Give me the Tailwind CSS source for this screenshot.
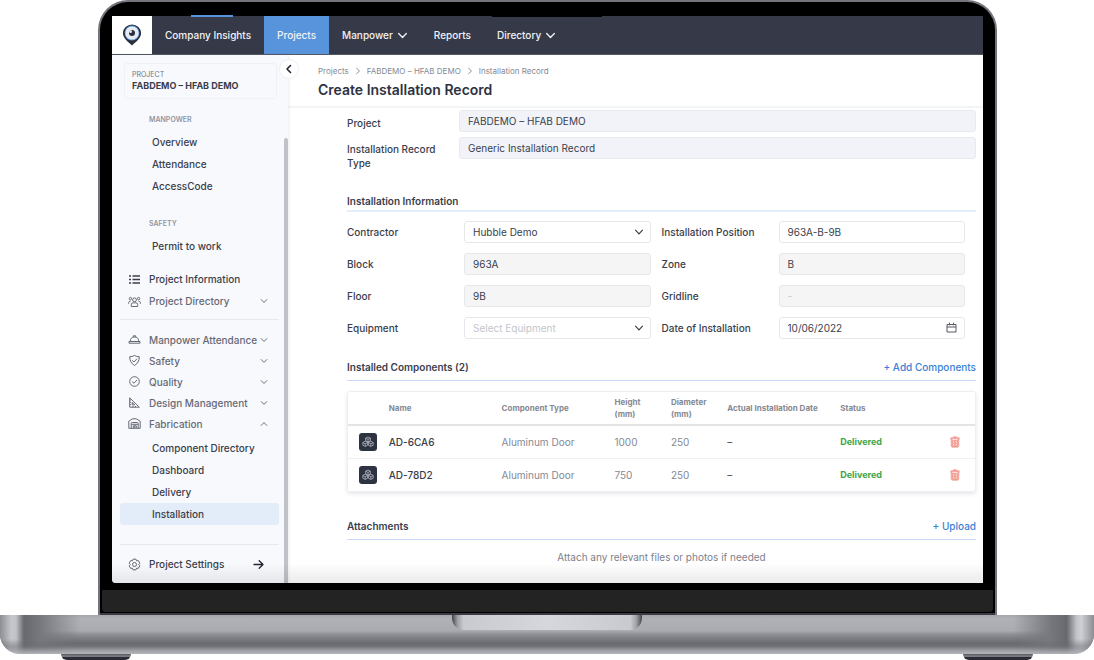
<!DOCTYPE html>
<html lang="en">
<head>
<meta charset="utf-8">
<meta name="viewport" content="width=device-width, initial-scale=1">
<title>Create Installation Record</title>
<script src="https://cdn.jsdelivr.net/npm/@tailwindcss/browser@4"></script>
</head>
<body class="bg-white font-['Inter','Liberation_Sans',sans-serif] text-[10px] leading-[14px] text-[#3a3e4b] overflow-hidden">

<svg class="hidden" aria-hidden="true">
  <symbol id="chevron" viewBox="0 0 10 10"><path d="M1.5 3.2 5 6.8l3.5-3.6" fill="none" stroke="currentColor" stroke-width="1.2" stroke-linecap="round" stroke-linejoin="round"/></symbol>
  <symbol id="module" viewBox="0 0 18 18">
    <rect width="18" height="18" rx="3" fill="#2e3342"/>
    <g fill="none" stroke="#b4b8c2" stroke-width="0.8" stroke-linejoin="round">
      <path d="M9 4l2.400 1.200v2.600L9 9 6.600 7.800V5.200zM6.200 8.200l2.400 1.300v2.700l-2.400 1.200-2.400-1.200V9.500zM11.800 8.200l2.400 1.300v2.700l-2.400 1.200-2.400-1.200V9.500z"/>
      <path d="M6.600 5.200 9 6.400l2.400-1.200M9 6.400V9M3.800 9.500l2.400 1.200 2.400-1.200M6.200 10.700v2.700M9.400 9.500l2.400 1.200 2.400-1.200M11.800 10.700v2.700"/>
    </g>
  </symbol>
  <symbol id="trash" viewBox="0 0 10 12">
    <path d="M3.500.8h3l.5 1h2.200v2H.8v-2H3zM1.200 4.300h7.600v5.400q0 1.500-1.500 1.500H2.700q-1.500 0-1.500-1.500z" fill="#f3a097" stroke="#f3a097" stroke-width=".8" stroke-linejoin="round"/>
    <path d="M3.600 5.400v1.400M3.600 8v1.300M6.400 5.400v1.400M6.400 8v1.300M2.500 3.400h5" stroke="#fff" stroke-width=".8"/>
  </symbol>
</svg>

<div class="flex flex-col">
  <!-- Laptop lid -->
  <div class="ml-[98px] mr-[97px] rounded-t-[30px] border-x-2 border-t-2 border-[#74757c] bg-black">
    <div class="mx-3 pt-[14px]">
      <!-- Screen -->
      <div class="relative overflow-hidden rounded-bl-sm bg-white">

        <header class="flex h-[39px] bg-[#363a48] border-b border-[#555965] font-medium text-[#f1f2f5]">
          <a href="#" aria-label="Home" class="flex w-10 items-center justify-center bg-white">
            <svg class="h-[22px] w-5" viewBox="0 0 20 22">
              <path d="M10 21.500C7 18.600.9 14.400.9 9.300a9.100 8.800 0 0 1 18.200 0C19.100 14.400 13 18.600 10 21.500z" fill="#2b2f3b"/>
              <circle cx="10" cy="9" r="7.400" fill="#5f9be0"/>
              <circle cx="10" cy="9" r="6.600" fill="#e6ebf3"/>
              <circle cx="10" cy="9" r="3" fill="#2b2f3b"/>
              <circle cx="8.600" cy="7.700" r="1.400" fill="#e6ebf3"/>
            </svg>
          </a>
          <nav class="flex" aria-label="Main">
            <a href="#" class="flex items-center px-[13px]">Company Insights</a>
            <a href="#" aria-current="page" class="flex items-center bg-[#5894dc] px-[13px]">Projects</a>
            <a href="#" class="flex items-center gap-1 px-[13px]">Manpower <svg class="size-[11px]"><use href="#chevron"/></svg></a>
            <a href="#" class="flex items-center px-[13px]">Reports</a>
            <a href="#" class="flex items-center gap-1 px-[13px]">Directory <svg class="size-[11px]"><use href="#chevron"/></svg></a>
          </nav>
        </header>

        <div class="flex">
          <!-- Sidebar -->
          <aside class="relative w-44 shrink-0 bg-[#f8f9fd] pt-2 shadow-[0_0_3px_rgba(40,50,80,0.15)]">
            <div class="ml-3 mr-[11px] flex h-9 flex-col justify-center rounded-[3px] border border-[#eff1f7] px-[7px]">
              <div class="text-[7px] leading-[10px] text-[#70747f]">PROJECT</div>
              <div class="text-[9px] leading-[12px] font-bold whitespace-nowrap">FABDEMO – HFAB DEMO</div>
            </div>
            <nav class="ml-2 mr-[9px] mt-[10px] font-medium" aria-label="Project">
              <h2 class="flex h-[22px] items-center pl-[29px] text-[7px] font-semibold text-[#92959f]">MANPOWER</h2>
              <a href="#" class="flex h-[22px] items-center pl-8">Overview</a>
              <a href="#" class="flex h-[22px] items-center pl-8">Attendance</a>
              <a href="#" class="flex h-[22px] items-center pl-8">AccessCode</a>
              <h2 class="mt-4 flex h-[22px] items-center pl-[29px] text-[7px] font-semibold text-[#92959f]">SAFETY</h2>
              <a href="#" class="flex h-[22px] items-center pl-8">Permit to work</a>

              <a href="#" class="mt-[11px] flex h-[22px] items-center pl-2">
                <svg class="mr-2 size-[13px]" viewBox="0 0 13 13" fill="none" stroke="currentColor" stroke-width="1.300"><path d="M4.500 3H12M4.500 6.500H12M4.500 10H12M1 3h2M1 6.500h2M1 10h2"/></svg>
                Project Information</a>
              <button type="button" class="flex h-[22px] w-full items-center pl-2 pr-[11px] text-[#666a75]">
                <svg class="mr-2 size-[13px]" viewBox="0 0 13 13" fill="none" stroke="currentColor"><circle cx="6.500" cy="4.800" r="1.900"/><path d="M3.300 11.500V9.600q0-1.800 1.800-1.800h2.800q1.800 0 1.800 1.800v1.900zM.7 8.800V7.500q0-1.400 1.900-1.400M12.300 8.800V7.500q0-1.400-1.900-1.400"/><circle cx="2.400" cy="3.600" r="1.200"/><circle cx="10.600" cy="3.600" r="1.200"/></svg>
                Project Directory <svg class="ml-auto size-2"><use href="#chevron"/></svg></button>

              <hr class="mt-[7px] mb-[9px] border-[#e6e8ee]">

              <div class="text-[#666a75]">
                <button type="button" class="flex h-[21px] w-full items-center pl-2 pr-[11px] whitespace-nowrap">
                  <svg class="mr-2 size-[13px] shrink-0" viewBox="0 0 13 13" fill="none" stroke="currentColor"><path d="M2.300 8.500q0-4.500 4.200-4.500t4.200 4.500M5.300 4V2.800h2.400V4M1 8.500h11v1.700H1z"/></svg>
                  Manpower Attendance <svg class="ml-auto size-2 shrink-0"><use href="#chevron"/></svg></button>
                <button type="button" class="flex h-[21px] w-full items-center pl-2 pr-[11px]">
                  <svg class="mr-2 size-[13px]" viewBox="0 0 13 13" fill="none" stroke="currentColor"><path d="M6.500 1.500q2 1.200 4.800 1.200 0 6-4.800 8.800-4.800-2.800-4.800-8.800 2.800 0 4.800-1.200zM4.200 6.300 6 8l3-3.300"/></svg>
                  Safety <svg class="ml-auto size-2"><use href="#chevron"/></svg></button>
                <button type="button" class="flex h-[21px] w-full items-center pl-2 pr-[11px]">
                  <svg class="mr-2 size-[13px]" viewBox="0 0 13 13" fill="none" stroke="currentColor"><circle cx="6.500" cy="6.500" r="4.800"/><path d="M4.200 6.600 6 8.200l3-3.200"/></svg>
                  Quality <svg class="ml-auto size-2"><use href="#chevron"/></svg></button>
                <button type="button" class="flex h-[21px] w-full items-center pl-2 pr-[11px]">
                  <svg class="mr-2 size-[13px]" viewBox="0 0 13 13" fill="none" stroke="currentColor"><path d="M1.700 1.800v9.400h9.600zM4.200 6.400v2.500h2.500zM1.700 4h1.200M1.700 6.300h1.200M1.700 8.600h1.200M5 11.200V10M7.500 11.200V10"/></svg>
                  Design Management <svg class="ml-auto size-2"><use href="#chevron"/></svg></button>
                <button type="button" aria-expanded="true" class="flex h-[21px] w-full items-center pl-2 pr-[11px]">
                  <svg class="mr-2 size-[13px]" viewBox="0 0 13 13" fill="none" stroke="currentColor"><path d="M.8 11.300V4.200l3.700-2.400h3.700l4 2.400v7.100zM3.200 11.300V6.500q0-1 1-1h5q1 0 1 1v4.800M3.200 7.300h7M5.300 11V8.800h3V11M6.800 8.800V11"/></svg>
                  Fabrication <svg class="ml-auto size-2 rotate-180"><use href="#chevron"/></svg></button>
              </div>

              <div class="mt-[3px]">
                <a href="#" class="flex h-[22px] items-center pl-8">Component Directory</a>
                <a href="#" class="flex h-[22px] items-center pl-8">Dashboard</a>
                <a href="#" class="flex h-[22px] items-center pl-8">Delivery</a>
                <a href="#" aria-current="page" class="flex h-[22px] items-center rounded-[3px] bg-[#e2edf9] pl-8">Installation</a>
              </div>

              <hr class="mt-[19px] mb-2 border-[#e6e8ee]">
              <a href="#" class="mb-2 flex h-[22px] items-center pl-2 pr-[15px]">
                <svg class="mr-2 size-[13px]" viewBox="0 0 13 13" fill="none" stroke="#666a75"><path d="M5 1.200h3l.6 1.600 1.700-.2 1.500 2.600-1.100 1.300 1.100 1.300-1.500 2.600-1.700-.2-.6 1.600H5l-.6-1.600-1.700.2-1.500-2.600 1.100-1.300-1.100-1.300 1.500-2.600 1.700.2z" stroke-linejoin="round"/><circle cx="6.500" cy="6.500" r="2"/></svg>
                Project Settings
                <svg class="ml-auto size-[11px]" viewBox="0 0 11 11" fill="none" stroke="#22252f" stroke-width="1.300" stroke-linecap="round" stroke-linejoin="round"><path d="M1 5.500h9M6.200 1.700 10 5.500 6.200 9.300"/></svg>
              </a>
            </nav>
            <div class="absolute right-0 top-[83px] bottom-0 w-1 rounded-t bg-[#c0c2c9]"></div>
            <button type="button" aria-label="Collapse sidebar" class="absolute -right-[11px] top-1 z-10 flex size-5 items-center justify-center rounded-full border border-[#eef0f4] bg-white">
              <svg class="size-[10px] text-[#22252f]" viewBox="0 0 10 10" fill="none" stroke="currentColor" stroke-width="1.600" stroke-linecap="round" stroke-linejoin="round"><path d="M6.500 1.500 3 5l3.500 3.500"/></svg>
            </button>
          </aside>

          <!-- Main -->
          <main class="min-w-0 flex-1 bg-white">
            <div class="h-[53px] border-b-2 border-[#f3f4f6] pl-[30px] pt-[9px]">
              <nav aria-label="Breadcrumb" class="flex h-[14px] items-center gap-[5px] text-[8px] text-[#858993]">
                <a href="#">Projects</a><svg class="size-2 -rotate-90"><use href="#chevron"/></svg>
                <a href="#">FABDEMO – HFAB DEMO</a><svg class="size-2 -rotate-90"><use href="#chevron"/></svg>
                <span>Installation Record</span>
              </nav>
              <h1 class="mt-[3px] text-[14px] leading-[18px] font-semibold text-[#2e323f]">Create Installation Record</h1>
            </div>

            <form class="pl-[59px] pr-[7px] pt-[2px]">
              <div class="grid grid-cols-[112px_1fr] gap-y-[5px]">
                <label for="project" class="pt-[6px] font-medium">Project</label>
                <input id="project" readonly value="FABDEMO – HFAB DEMO" class="h-[22px] min-w-0 rounded-[3px] border border-[#e8eaf0] bg-[#f1f3f9] px-2">
                <label for="rtype" class="w-24 pt-[5px] font-medium">Installation Record Type</label>
                <input id="rtype" readonly value="Generic Installation Record" class="h-[22px] min-w-0 rounded-[3px] border border-[#e8eaf0] bg-[#f1f3f9] px-2">
              </div>

              <h2 class="mt-6 border-b-2 border-[#e2eefb] pb-[2px] font-semibold">Installation Information</h2>
              <div class="mt-[9px] grid grid-cols-[117px_1fr_128px_1fr] items-center gap-y-[10px] pr-[11px] font-medium">
                <label for="contractor">Contractor</label>
                <div class="relative">
                  <select id="contractor" class="block h-[22px] w-full appearance-none rounded-[3px] border border-[#e6e7ea] bg-white px-2 font-normal"><option>Hubble Demo</option></select>
                  <svg class="pointer-events-none absolute right-[7px] top-[6px] size-[10px]"><use href="#chevron"/></svg>
                </div>
                <label for="position" class="pl-[11px]">Installation Position</label>
                <input id="position" value="963A-B-9B" class="h-[22px] w-full rounded-[3px] border border-[#e6e7ea] px-2 font-normal">

                <label for="block">Block</label>
                <input id="block" disabled value="963A" class="h-[22px] w-full rounded-[3px] border border-[#e6e7ea] bg-[#f5f5f5] px-2 font-normal">
                <label for="zone" class="pl-[11px]">Zone</label>
                <input id="zone" disabled value="B" class="h-[22px] w-full rounded-[3px] border border-[#e6e7ea] bg-[#f5f5f5] px-2 font-normal">

                <label for="floor">Floor</label>
                <input id="floor" disabled value="9B" class="h-[22px] w-full rounded-[3px] border border-[#e6e7ea] bg-[#f5f5f5] px-2 font-normal">
                <label for="gridline" class="pl-[11px]">Gridline</label>
                <input id="gridline" disabled placeholder="-" class="h-[22px] w-full rounded-[3px] border border-[#e6e7ea] bg-[#f5f5f5] px-2 font-normal placeholder:text-[#c3c5ca]">

                <label for="equipment">Equipment</label>
                <div class="relative">
                  <select id="equipment" class="block h-[22px] w-full appearance-none rounded-[3px] border border-[#e6e7ea] bg-white px-2 font-normal text-[#c3c5ca]"><option>Select Equipment</option></select>
                  <svg class="pointer-events-none absolute right-[7px] top-[6px] size-[10px]"><use href="#chevron"/></svg>
                </div>
                <label for="date" class="pl-[11px]">Date of Installation</label>
                <div class="relative">
                  <input id="date" value="10/06/2022" class="block h-[22px] w-full rounded-[3px] border border-[#e6e7ea] px-2 font-normal">
                  <button type="button" aria-label="Open calendar" class="absolute right-2 top-[5px]">
                    <svg class="block size-[11px]" viewBox="0 0 11 11" fill="none" stroke="#555965"><path d="M1 2.500h9v7.500H1zM1 5h9M3.500.7v2.600M7.500.7v2.600"/></svg>
                  </button>
                </div>
              </div>

              <div class="mt-[21px] flex items-center justify-between border-b border-[#c8dbf7] pb-[6px]">
                <h2 class="font-semibold">Installed Components (2)</h2>
                <button type="button" class="font-medium text-[#3981d6]">+ Add Components</button>
              </div>
              <div class="mt-[10px] overflow-hidden rounded-[3px] border border-[#eeeff2] shadow-[0_2px_4px_rgba(40,50,80,0.12)]">
                <table class="w-full table-fixed text-left text-[#858993]">
                  <colgroup><col class="w-[6.5%]"><col class="w-[18%]"><col class="w-[18%]"><col class="w-[9%]"><col class="w-[9%]"><col class="w-[18%]"><col class="w-[15%]"><col></colgroup>
                  <thead class="text-[8px] leading-3">
                    <tr class="h-[33px] border-b-2 border-[#e3e4e6] whitespace-nowrap">
                      <th></th><th class="font-bold">Name</th><th class="font-bold">Component Type</th><th class="font-bold">Height<br>(mm)</th><th class="font-bold">Diameter<br>(mm)</th><th class="font-bold">Actual Installation Date</th><th class="font-bold">Status</th><th></th>
                    </tr>
                  </thead>
                  <tbody>
                    <tr class="h-[33px] border-b border-[#f0f1f3]">
                      <td class="pl-[11px]"><svg class="size-[18px]"><use href="#module"/></svg></td>
                      <td class="font-medium text-[#3a3e4b]">AD-6CA6</td><td>Aluminum Door</td><td>1000</td><td>250</td><td class="text-[#3a3e4b]">–</td>
                      <td class="text-[9px] font-bold text-[#3fa647]">Delivered</td>
                      <td><button type="button" aria-label="Delete AD-6CA6" class="ml-4 block"><svg class="block h-3 w-[10px]"><use href="#trash"/></svg></button></td>
                    </tr>
                    <tr class="h-[33px]">
                      <td class="pl-[11px]"><svg class="size-[18px]"><use href="#module"/></svg></td>
                      <td class="font-medium text-[#3a3e4b]">AD-78D2</td><td>Aluminum Door</td><td>750</td><td>250</td><td class="text-[#3a3e4b]">–</td>
                      <td class="text-[9px] font-bold text-[#3fa647]">Delivered</td>
                      <td><button type="button" aria-label="Delete AD-78D2" class="ml-4 block"><svg class="block h-3 w-[10px]"><use href="#trash"/></svg></button></td>
                    </tr>
                  </tbody>
                </table>
              </div>

              <div class="mt-[27px] flex items-center justify-between border-b border-[#c8dbf7] pb-[6px]">
                <h2 class="font-semibold">Attachments</h2>
                <button type="button" class="font-medium text-[#3981d6]">+ Upload</button>
              </div>
              <p class="mt-[10px] text-center text-[#7d818b]">Attach any relevant files or photos if needed</p>
            </form>
          </main>
        </div>
        <div class="pointer-events-none absolute inset-x-0 bottom-0 h-5 bg-gradient-to-b from-transparent to-black/8"></div>
      </div>
    </div>
    <!-- Strips of colour left along the top edge of the display -->
    <div class="absolute left-[191px] top-[15px] h-[2px] w-[42px] bg-[#5894dc]"></div>
    <div class="absolute left-[492px] top-4 h-px w-[110px] bg-black"></div>
    <div class="mx-[2px] mt-[7px] h-[22px] rounded-b-sm bg-[#232323]"></div>
    <div class="mt-px h-[2px] bg-[#3b3c43]"></div>
  </div>

  <!-- Laptop base -->
  <div class="relative h-[39px] overflow-hidden rounded-b-[20px] bg-linear-[180deg,#a5a6ab_0%,#b0b1b6_8%,#abacb1_40%,#8e8f94_50%,#696a6f_72%,#707176_80%,#a2a3a8_92%,#b4b5ba_100%]">
    <div class="absolute inset-y-0 left-0 w-20 bg-linear-[90deg,#8c8d92_0%,#c6c7cc_14%,#c2c3c8_20%,#68696e_30%,#77787d_50%,#77787d00_100%] mask-b-from-60%"></div>
    <div class="absolute inset-y-0 right-0 w-20 bg-linear-[270deg,#8c8d92_0%,#cfd0d5_16%,#c2c3c8_22%,#68696e_34%,#77787d_55%,#77787d00_100%] mask-b-from-60%"></div>
    <div class="mx-auto h-[15px] w-[190px] rounded-b-xl bg-linear-[90deg,#44454e_0%,#a0a1a7_3%,#c9cacf_6%,#d6d7dc_50%,#c9cacf_94%,#a0a1a7_97%,#44454e_100%]"></div>
  </div>
  <div class="mx-[61px] flex justify-between">
    <div class="h-[6px] w-[70px] rounded-b-lg bg-linear-[180deg,#55565e_0%,#85868c_40%,#2b2c36_55%,#2b2c36_100%]"></div>
    <div class="h-[6px] w-[70px] rounded-b-lg bg-linear-[180deg,#55565e_0%,#85868c_40%,#2b2c36_55%,#2b2c36_100%]"></div>
  </div>
</div>
</body>
</html>
